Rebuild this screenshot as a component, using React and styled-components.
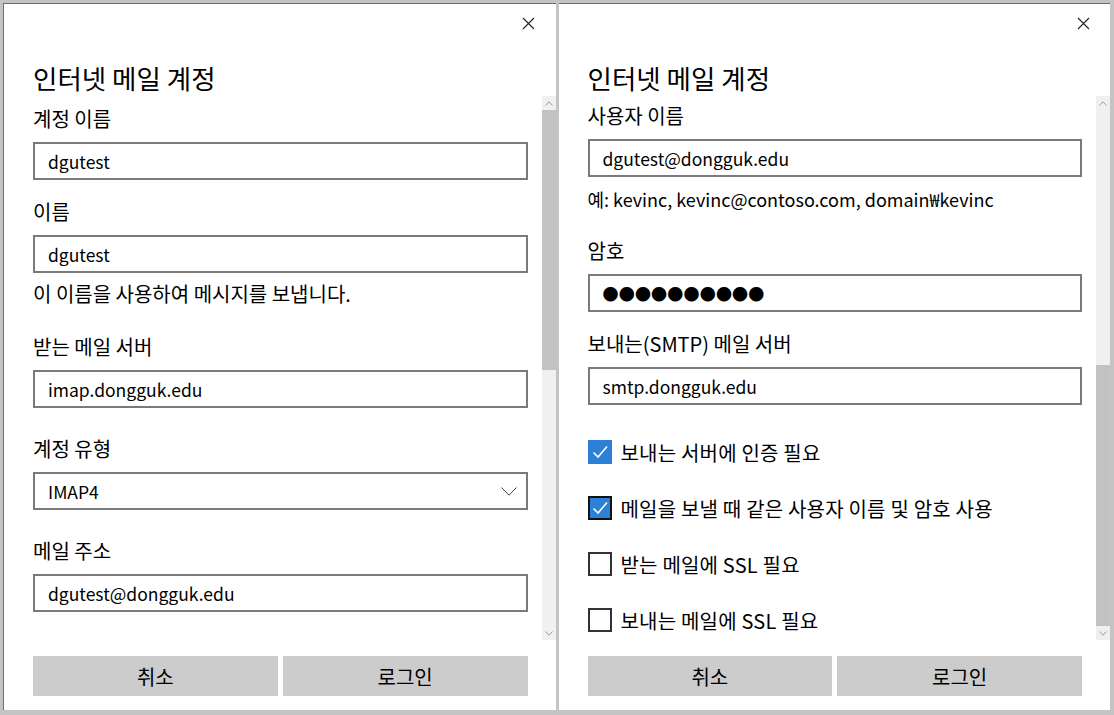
import React from 'react';
import styled, { createGlobalStyle } from 'styled-components';

const GlobalStyle = createGlobalStyle`
  html, body {
    margin: 0;
    padding: 0;
    background: #ffffff;
  }
  body {
    font-family: "Noto Sans CJK KR", "Noto Sans", sans-serif;
    color: #000;
  }
`;

// Layout
const Frame = styled.div`
  display: flex;
  gap: 3px;
  width: 1114px;
  height: 715px;
  box-sizing: border-box;
  padding: 3px 4px 5px 3px;
  background: #c4c4c4;
`;

const Panel = styled.div`
  flex: 1;
  display: flex;
  flex-direction: column;
  min-width: 0;
  background: #fff;
  border-top: 1px solid #6e6e6e;
  border-left: ${p => (p.$edge ? '1px solid #6e6e6e' : 'none')};
  padding-left: 29px;
`;

const TopBar = styled.div`
  display: flex;
  justify-content: flex-end;
  height: 38px;
`;

const CloseButton = styled.div`
  width: 46px;
  height: 38px;
  margin-right: 4px;
  display: flex;
  align-items: center;
  justify-content: center;
`;

const Title = styled.h1`
  margin: 20px 0 2px;
  font-size: 26.5px;
  line-height: 32px;
  font-weight: 400;
`;

const ScrollArea = styled.div`
  flex: 1;
  display: flex;
  min-height: 0;
`;

const Content = styled.div`
  flex: 1;
  overflow: hidden;
  padding: ${p => p.$top}px 14px 0 0;
`;

const Scrollbar = styled.div`
  width: 14px;
  display: flex;
  flex-direction: column;
  background: #f0f0f0;
`;

const Arrow = styled.div`
  height: 14px;
  display: flex;
  align-items: center;
  justify-content: center;
`;

const Track = styled.div`
  flex: 1;
  display: flex;
  flex-direction: column;
`;

const Thumb = styled.div`
  background: #c2c2c2;
`;

const Field = styled.div`
  margin-top: ${p => p.$gap || 0}px;
`;

const Label = styled.div`
  font-size: 20px;
  line-height: 26px;
  margin-bottom: 10px;
`;

const Helper = styled.div`
  font-size: ${p => p.$size || 20}px;
  line-height: 26px;
  margin-top: ${p => p.$gap}px;
`;

const Input = styled.div`
  height: 38px;
  box-sizing: border-box;
  border: 2px solid #7a7a7a;
  display: flex;
  align-items: center;
  justify-content: space-between;
  padding: 0 9px 0 13px;
  font-size: 17.5px;
  white-space: nowrap;
`;

const Dots = styled.span`
  font-size: 16px;
  letter-spacing: 0.2px;
`;

const CheckList = styled.div`
  display: flex;
  flex-direction: column;
  gap: 32px;
  margin-top: 35px;
`;

const CheckRow = styled.div`
  display: flex;
  align-items: center;
  gap: 9px;
  height: 24px;
  font-size: 20px;
  letter-spacing: 0.2px;
`;

const Box = styled.div`
  width: 24px;
  height: 24px;
  box-sizing: border-box;
  display: flex;
  align-items: center;
  justify-content: center;
  background: ${p => (p.$checked ? '#2c80d6' : '#fff')};
  border: 2px solid ${p => (p.$focus ? '#111' : p.$checked ? '#2c80d6' : '#333')};
`;

const Footer = styled.div`
  display: flex;
  gap: 5px;
  padding: 16px 28px 14px 0;
`;

const Button = styled.div`
  flex: 1;
  height: 40px;
  background: #cccccc;
  display: flex;
  align-items: center;
  justify-content: center;
  font-size: 20px;
`;

// Icons
const CloseIcon = () => (
  <svg width="13" height="13" viewBox="0 0 13 13">
    <path d="M1 1 L12 12 M12 1 L1 12" stroke="#222" strokeWidth="1.1" fill="none" />
  </svg>
);

const Chevron = ({ up, w = 8, h = 5, color = '#9a9a9a' }) => (
  <svg width={w} height={h} viewBox={`0 0 ${w} ${h}`}>
    <path
      d={up
        ? `M0.5 ${h - 0.5} L${w / 2} 0.8 L${w - 0.5} ${h - 0.5}`
        : `M0.5 0.5 L${w / 2} ${h - 0.8} L${w - 0.5} 0.5`}
      stroke={color}
      strokeWidth="1"
      fill="none"
    />
  </svg>
);

const CheckMark = () => (
  <svg width="18" height="18" viewBox="0 0 18 18">
    <path d="M2.5 9.5 L7 14 L16 3.5" stroke="#fff" strokeWidth="1.6" fill="none" />
  </svg>
);

const ScrollBar = ({ offset, size }) => (
  <Scrollbar>
    <Arrow><Chevron up /></Arrow>
    <Track>
      <Thumb style={{ marginTop: offset, height: size }} />
    </Track>
    <Arrow><Chevron /></Arrow>
  </Scrollbar>
);

const TextField = ({ label, value, gap }) => (
  <Field $gap={gap}>
    <Label>{label}</Label>
    <Input>{value}</Input>
  </Field>
);

const Check = ({ checked, focus, children }) => (
  <CheckRow>
    <Box $checked={checked} $focus={focus}>{checked && <CheckMark />}</Box>
    {children}
  </CheckRow>
);

const Dialog = ({ edge, top, thumb, children }) => (
  <Panel $edge={edge}>
    <TopBar>
      <CloseButton><CloseIcon /></CloseButton>
    </TopBar>
    <Title>인터넷 메일 계정</Title>
    <ScrollArea>
      <Content $top={top}>{children}</Content>
      <ScrollBar offset={thumb.offset} size={thumb.size} />
    </ScrollArea>
    <Footer>
      <Button>취소</Button>
      <Button>로그인</Button>
    </Footer>
  </Panel>
);

export default function App() {
  return (
    <>
      <GlobalStyle />
      <Frame>
        <Dialog edge top={10} thumb={{ offset: 0, size: 260 }}>
          <TextField label="계정 이름" value="dgutest" />
          <TextField label="이름" value="dgutest" gap={19} />
          <Helper $gap={8}>이 이름을 사용하여 메시지를 보냅니다.</Helper>
          <TextField label="받는 메일 서버" value="imap.dongguk.edu" gap={27} />
          <Field $gap={28}>
            <Label>계정 유형</Label>
            <Input>
              IMAP4
              <Chevron w={16} h={9} color="#444" />
            </Input>
          </Field>
          <TextField label="메일 주소" value="dgutest@dongguk.edu" gap={28} />
        </Dialog>
        <Dialog top={7} thumb={{ offset: 255, size: 261 }}>
          <TextField label="사용자 이름" value="dgutest@dongguk.edu" />
          <Helper $gap={9} $size={18}>예: kevinc, kevinc@contoso.com, domain₩kevinc</Helper>
          <Field $gap={26}>
            <Label>암호</Label>
            <Input><Dots>●●●●●●●●●●</Dots></Input>
          </Field>
          <TextField label="보내는(SMTP) 메일 서버" value="smtp.dongguk.edu" gap={19} />
          <CheckList>
            <Check checked>보내는 서버에 인증 필요</Check>
            <Check checked focus>메일을 보낼 때 같은 사용자 이름 및 암호 사용</Check>
            <Check>받는 메일에 SSL 필요</Check>
            <Check>보내는 메일에 SSL 필요</Check>
          </CheckList>
        </Dialog>
      </Frame>
    </>
  );
}
